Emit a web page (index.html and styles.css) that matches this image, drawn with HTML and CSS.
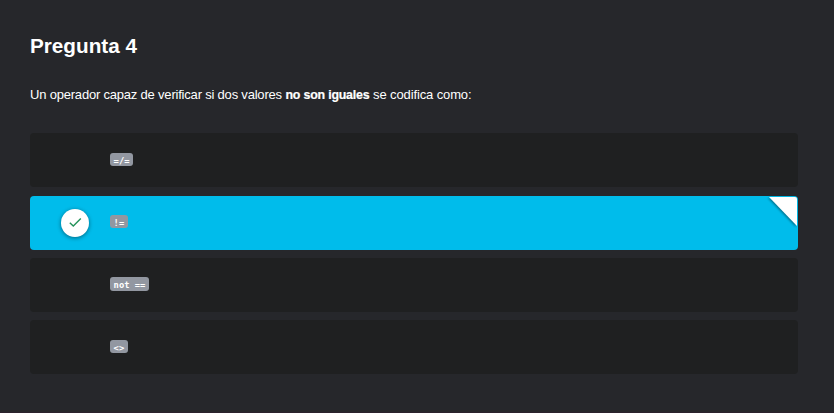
FILE: index.html
```html
<!DOCTYPE html>
<html lang="es">
<head>
<meta charset="utf-8">
<title>Pregunta 4</title>
<link rel="stylesheet" href="styles.css">
</head>
<body>
<main class="question">
  <h1 class="title">Pregunta 4</h1>
  <p class="prompt"><span class="lead">Un operador capaz de verificar si dos valores</span> <strong>no son iguales</strong> <span class="tail">se codifica como:</span></p>
  <ul class="options">
    <li class="option"><code>=/=</code></li>
    <li class="option selected">
      <span class="check"><svg width="14" height="12" viewBox="0 0 14 12"><path d="M1.3 6.2 4.8 9.6 12.3 2"/></svg></span>
      <code>!=</code>
      <svg class="corner" width="30" height="32" viewBox="0 0 30 32"><path d="M1 1H27Q29 1 29 3V30Z"/></svg>
    </li>
    <li class="option tall"><code>not ==</code></li>
    <li class="option"><code>&lt;&gt;</code></li>
  </ul>
</main>
</body>
</html>
```
FILE: styles.css
```css
* { box-sizing: border-box; }
body {
  margin: 0;
  background: #26272b;
  color: #fff;
  font-family: "Liberation Sans", Arial, sans-serif;
}
.question {
  height: 413px;
  padding: 33px 36px 0 30px;
  border-bottom: 1px solid #2b222d;
}
.title {
  margin: 0;
  font-size: 20.7px;
  line-height: 26px;
  font-weight: 700;
}
.prompt {
  margin: 26px 0 0;
  font-size: 13px;
  line-height: 20px;
  white-space: nowrap;
}
.lead { letter-spacing: -.2px; }
.prompt strong { font-size: 12.4px; letter-spacing: -.2px; -webkit-text-stroke: .2px #fff; }
.tail { letter-spacing: -.12px; }
.options {
  list-style: none;
  margin: 28px 0 0;
  padding: 0;
  display: flex;
  flex-direction: column;
  gap: 8px;
}
.option {
  position: relative;
  height: 54px;
  padding: 20px 0 0 80px;
  display: flex;
  align-items: flex-start;
  border-radius: 4px;
  background: #1f2021;
}
.option.selected {
  margin-top: 1px;
  padding: 13px 0 0 31px;
  background: #00bceb;
}
.option.selected code { margin: 6px 0 0 21px; }
.option.tall { padding-top: 19px; }
.option.tall code { height: 14px; }
code {
  height: 13px;
  padding: 0 3.6px;
  border-radius: 3px;
  background: #9297a1;
  font: 700 8.8px/17px "DejaVu Sans Mono", monospace;
  white-space: pre;
}
.check {
  width: 28px;
  height: 28px;
  display: flex;
  align-items: center;
  justify-content: center;
  border-radius: 50%;
  background: #fff;
  box-shadow: 0 1px 4px rgba(0, 0, 0, .45);
}
.check svg { transform: translate(.5px, -.5px); }
.check path {
  fill: none;
  stroke: #24935a;
  stroke-width: 1.4;
}
.corner {
  position: absolute;
  top: 0;
  right: 0;
  filter: drop-shadow(-1px 1px 1px rgba(0, 0, 0, .4));
}
.corner path { fill: #fff; }
```
